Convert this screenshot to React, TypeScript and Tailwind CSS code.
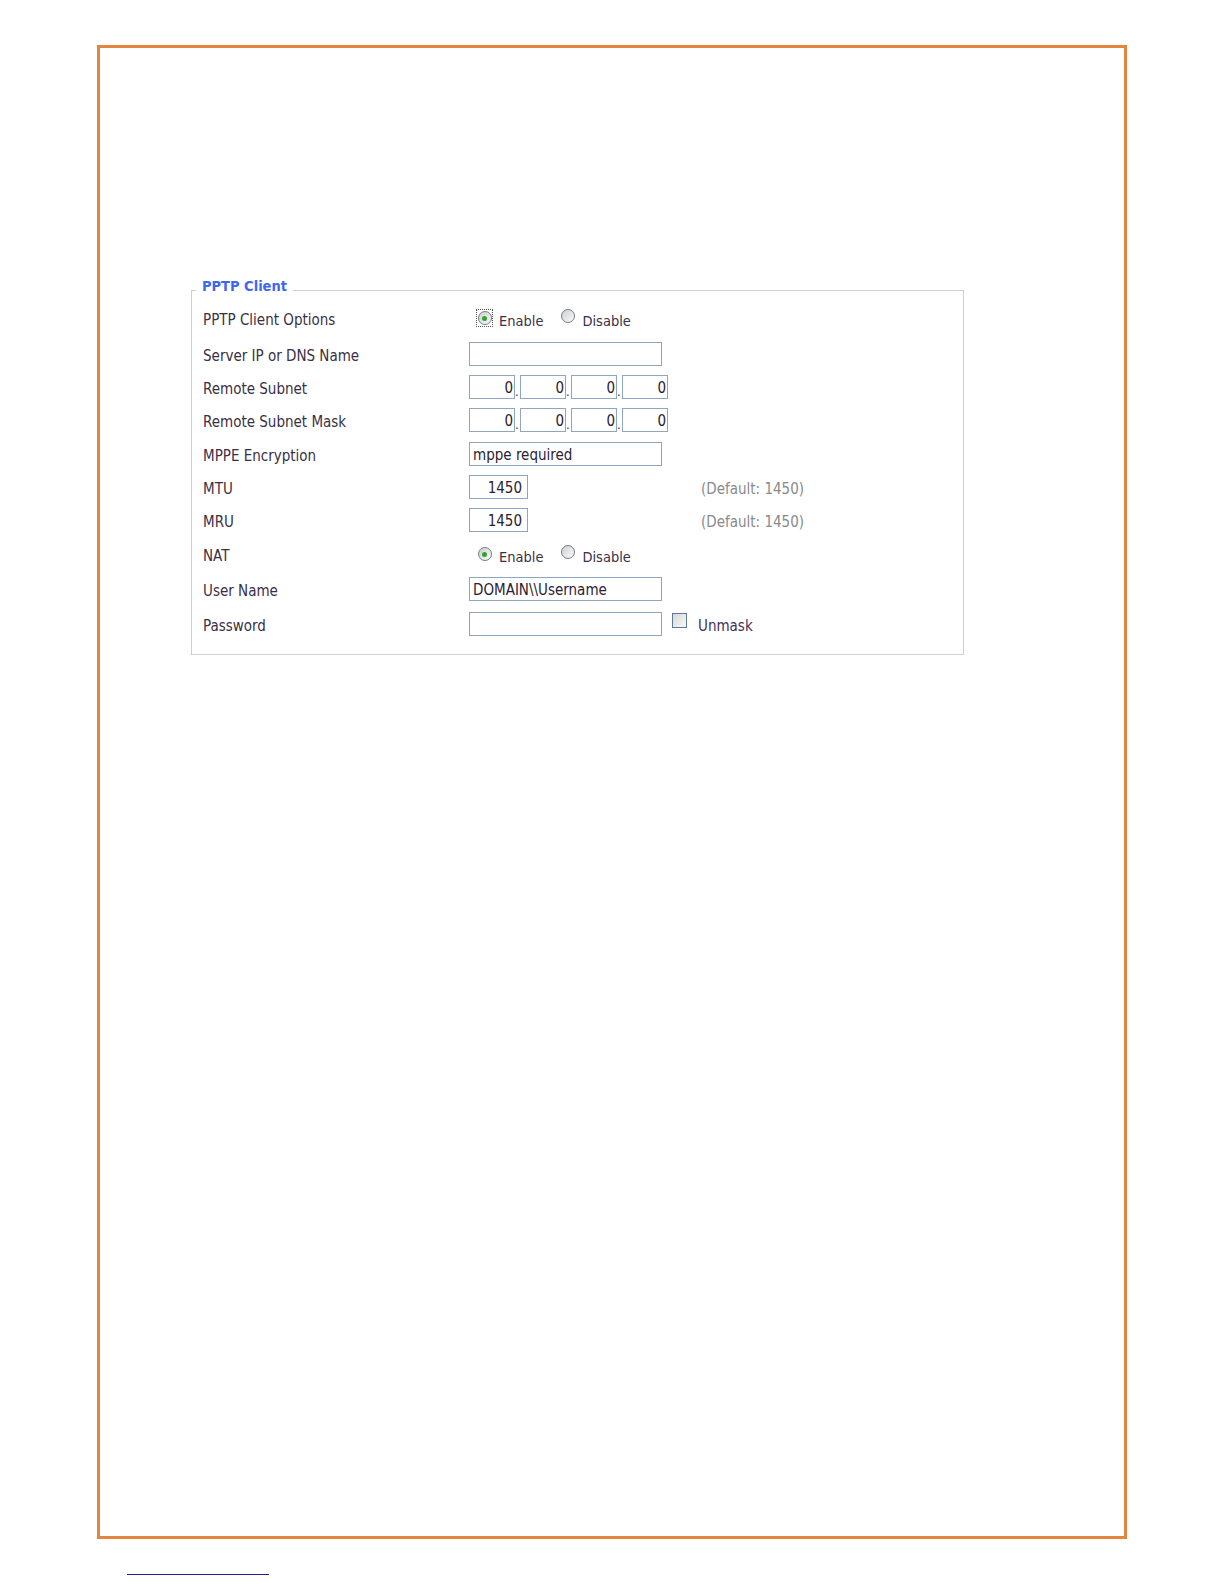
import React from "react";

const FONT = "font-['DejaVu_Sans_Condensed','DejaVu_Sans',sans-serif]";

function Label({ children }: { children: React.ReactNode }) {
  return (
    <div className="h-[24px] leading-[28px] text-[15px] text-[#3a2f45] whitespace-nowrap">
      {children}
    </div>
  );
}

function Radio({ checked, focus }: { checked?: boolean; focus?: boolean }) {
  return (
    <span
      className={
        "inline-flex w-[17px] h-[18px] items-center justify-center border border-dotted " +
        (focus ? "border-[#555]" : "border-transparent")
      }
    >
      <span className="flex w-[14px] h-[14px] items-center justify-center rounded-full border border-[#6f7d8c] bg-gradient-to-br from-[#cfcfcf] to-[#fbfbfb]">
        {checked && <span className="block w-[5px] h-[5px] rounded-full bg-[#2ea52e]" />}
      </span>
    </span>
  );
}

function RadioPair({ focus }: { focus?: boolean }) {
  return (
    <div className="flex items-center h-[24px] pl-[7px] text-[14.5px] text-[#3a2f45]">
      <Radio checked focus={focus} />
      <span className="ml-[6px] h-[24px] leading-[30px]">Enable</span>
      <span className="ml-[16px]">
        <Radio />
      </span>
      <span className="ml-[6px] h-[24px] leading-[30px]">Disable</span>
    </div>
  );
}

function TextInput({
  value = "",
  w,
  right,
}: {
  value?: string;
  w: string;
  right?: string;
}) {
  return (
    <input
      readOnly
      value={value}
      className={
        "block h-[24px] border border-[#8ea7bf] bg-white pt-[2px] text-[15px] leading-[20px] text-[#2a2233] outline-none " +
        w +
        " " +
        (right ? "text-right " + right : "px-[3px]")
      }
    />
  );
}

function IpBoxes() {
  return (
    <div className="flex items-end h-[24px]">
      <TextInput value="0" w="w-[46px]" right="pr-[1px]" />
      <span className="w-[5px] text-[13px] leading-[14px] text-[#3a2f45]">.</span>
      <TextInput value="0" w="w-[46px]" right="pr-[1px]" />
      <span className="w-[5px] text-[13px] leading-[14px] text-[#3a2f45]">.</span>
      <TextInput value="0" w="w-[46px]" right="pr-[1px]" />
      <span className="w-[5px] text-[13px] leading-[14px] text-[#3a2f45]">.</span>
      <TextInput value="0" w="w-[46px]" right="pr-[1px]" />
    </div>
  );
}

function Row({
  label,
  mt,
  children,
}: {
  label: string;
  mt: string;
  children: React.ReactNode;
}) {
  return (
    <div className={"grid grid-cols-[266px_1fr] h-[24px] " + mt}>
      <Label>{label}</Label>
      <div className="flex items-center h-[24px]">{children}</div>
    </div>
  );
}

function DefaultNote() {
  return (
    <div className="ml-[173px] h-[24px] leading-[28px] text-[15px] text-[#8a8a8a] whitespace-nowrap">
      (Default: 1450)
    </div>
  );
}

export default function App() {
  return (
    <div className={"w-[1224px] h-[1584px] bg-white pt-[45px] pl-[97px] " + FONT}>
      <div className="w-[1030px] h-[1494px] border-[3px] border-[#e3843f]">
        <div className="relative ml-[91px] mt-[242px] w-[773px] border border-[#cfcfcf] pl-[11px] pt-[15px] pb-[18px]">
          <div className="absolute left-[4px] -top-[13px] px-[6px] bg-white text-[14.5px] leading-[16px] font-bold text-[#3f66ee]">
            PPTP Client
          </div>

          <Row label="PPTP Client Options" mt="mt-0">
            <RadioPair focus />
          </Row>
          <Row label="Server IP or DNS Name" mt="mt-[12px]">
            <TextInput w="w-[193px]" />
          </Row>
          <Row label="Remote Subnet" mt="mt-[9px]">
            <IpBoxes />
          </Row>
          <Row label="Remote Subnet Mask" mt="mt-[9px]">
            <IpBoxes />
          </Row>
          <Row label="MPPE Encryption" mt="mt-[10px]">
            <TextInput value="mppe required" w="w-[193px]" />
          </Row>
          <Row label="MTU" mt="mt-[9px]">
            <TextInput value="1450" w="w-[59px]" right="pr-[5px]" />
            <DefaultNote />
          </Row>
          <Row label="MRU" mt="mt-[9px]">
            <TextInput value="1450" w="w-[59px]" right="pr-[5px]" />
            <DefaultNote />
          </Row>
          <Row label="NAT" mt="mt-[10px]">
            <RadioPair />
          </Row>
          <Row label="User Name" mt="mt-[11px]">
            <TextInput value="DOMAIN\\Username" w="w-[193px]" />
          </Row>
          <Row label="Password" mt="mt-[11px]">
            <TextInput w="w-[193px]" />
            <span className="self-start mt-[1px] ml-[10px] block w-[15px] h-[15px] border border-[#5f7a96] bg-gradient-to-br from-[#d6d6d6] to-[#fafafa]" />
            <span className="ml-[11px] h-[24px] leading-[28px] text-[15px] text-[#44305a]">Unmask</span>
          </Row>
        </div>
      </div>
      <div className="ml-[30px] mt-[35px] w-[142px] h-[1px] bg-[#1d1d96]" />
    </div>
  );
}
